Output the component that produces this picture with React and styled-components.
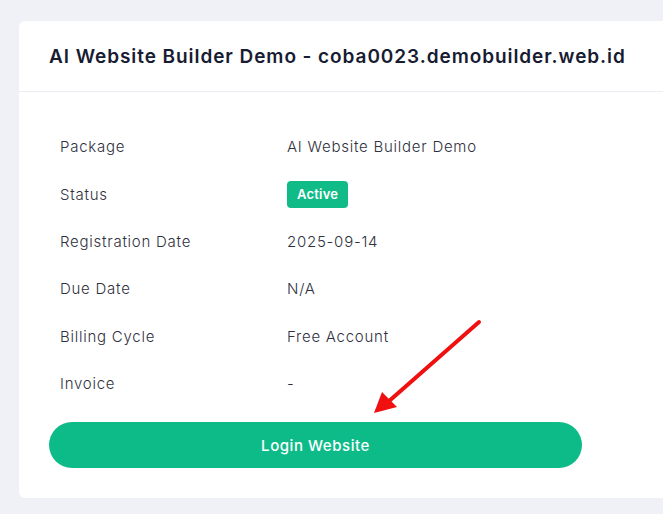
import React from 'react';
import styled, { createGlobalStyle } from 'styled-components';

const Global = createGlobalStyle`
  html, body {
    margin: 0;
    padding: 0;
    background: #f0f1f6;
    overflow: hidden;
  }
  body {
    font-family: Inter, "Noto Sans", sans-serif;
    color: #2b2d3a;
  }
`;

const Page = styled.div`
  padding: 21px 0 0 19px;
  width: 644px;
`;

const Card = styled.div`
  position: relative;
  background: #fff;
  border-radius: 6px 0 0 6px;
`;

const Header = styled.div`
  height: 71px;
  display: flex;
  align-items: center;
  padding: 0 30px;
  border-bottom: 1px solid #ebedf2;
  box-sizing: border-box;
`;

const Title = styled.h3`
  margin: 0;
  font-size: 19px;
  font-weight: 600;
  color: #181c32;
  letter-spacing: 0.93px;
  white-space: nowrap;
`;

const Body = styled.div`
  padding: 31px 30px 30px;
`;

const Table = styled.div`
  display: grid;
  grid-template-columns: 227px 1fr;
  padding-left: 11px;
`;

const Cell = styled.div`
  height: 47.4px;
  display: flex;
  align-items: center;
  font-size: 15px;
  font-weight: 300;
  letter-spacing: 0.75px;
  color: #2f3140;
`;

const Badge = styled.span`
  background: #10bb87;
  color: #fff;
  font-size: 13px;
  font-weight: 600;
  letter-spacing: 0.2px;
  padding: 0 10px;
  height: 27px;
  line-height: 27px;
  border-radius: 4px;
`;

const LoginButton = styled.button`
  margin-top: 15px;
  width: 533px;
  height: 46px;
  border: none;
  border-radius: 23px;
  background: #0dbb89;
  color: #fff;
  font-family: inherit;
  font-size: 15px;
  font-weight: 500;
  letter-spacing: 0.55px;
  cursor: pointer;
`;

const Arrow = styled.svg`
  position: absolute;
  left: 0;
  top: 0;
  pointer-events: none;
`;

const rows = [
  ['Package', 'AI Website Builder Demo'],
  ['Status', <Badge>Active</Badge>],
  ['Registration Date', '2025-09-14'],
  ['Due Date', 'N/A'],
  ['Billing Cycle', 'Free Account'],
  ['Invoice', '-'],
];

export default function App() {
  return (
    <Page>
      <Global />
      <Card>
        <Header>
          <Title>AI Website Builder Demo - coba0023.demobuilder.web.id</Title>
        </Header>
        <Body>
          <Table>
            {rows.map(([label, value]) => (
              <React.Fragment key={label}>
                <Cell>{label}</Cell>
                <Cell>{value}</Cell>
              </React.Fragment>
            ))}
          </Table>
          <LoginButton>Login Website</LoginButton>
        </Body>
        {/* annotation arrow drawn over the card */}
        <Arrow width="644" height="493" viewBox="19 21 644 493">
          <line x1="479" y1="322" x2="388" y2="402" stroke="#f01010" strokeWidth="4" strokeLinecap="round" />
          <polygon points="374,413 382,392 397,407" fill="#f01010" />
        </Arrow>
      </Card>
    </Page>
  );
}
